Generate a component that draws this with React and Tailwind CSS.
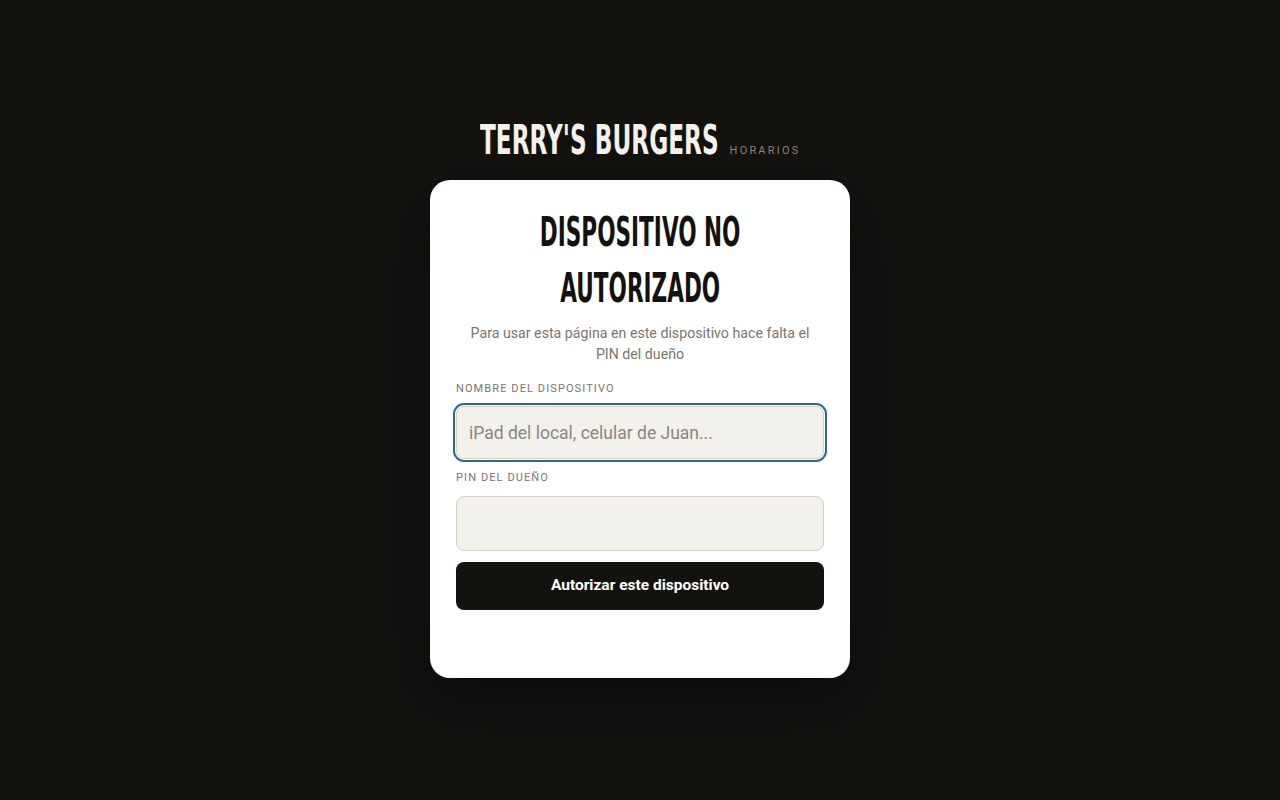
import React from 'react';

const display = { fontFamily: '"DejaVu Sans Condensed", "DejaVu Sans", sans-serif' };

export default function App() {
    return (
        <div
            className="min-h-screen w-full bg-[#14120f] flex flex-col items-center pt-[116px]"
            style={{ fontFamily: 'Roboto, "Liberation Sans", sans-serif' }}
        >
            {/* Brand */}
            <div className="flex items-baseline gap-3 mb-4">
                <h1 className="w-[238px] text-[40px] leading-[48px] font-bold uppercase text-[#f3f1ec] whitespace-nowrap" style={display}>
                    <span className="inline-block origin-left scale-x-[0.645]">Terry's Burgers</span>
                </h1>
                <span className="text-[11px] uppercase tracking-[0.2em] text-[#8a8680]">Horarios</span>
            </div>

            {/* Card */}
            <div className="w-[420px] bg-white rounded-[20px] px-[26px] pt-[24px] pb-[68px] shadow-[0_20px_60px_rgba(0,0,0,0.45)]">
                <h2 className="flex flex-col items-center text-[40px] leading-[56px] font-bold uppercase text-[#14120f] whitespace-nowrap" style={display}>
                    <span className="inline-block scale-x-[0.6]">Dispositivo no</span>
                    <span className="inline-block scale-x-[0.6]">Autorizado</span>
                </h2>
                <p className="mt-[7px] px-2 text-center text-[14.2px] leading-[21px] text-[#7a7670]">
                    Para usar esta página en este dispositivo hace falta el PIN del dueño
                </p>

                <label className="block mt-[17px] mb-[10px] text-[11px] leading-[14px] uppercase tracking-[0.1em] text-[#7a7670]">
                    Nombre del dispositivo
                </label>
                <input
                    type="text"
                    placeholder="iPad del local, celular de Juan..."
                    className="block w-full h-[53px] rounded-[8px] bg-[#f3f1ec] border border-[#d6d2c8] px-3 text-[17.5px] text-[#14120f] placeholder:text-[#8a8680] outline-2 outline-offset-1 outline-[#2c6a8e] outline-solid"
                />

                <label className="block mt-[12px] mb-[11px] text-[11px] leading-[14px] uppercase tracking-[0.1em] text-[#7a7670]">
                    PIN del dueño
                </label>
                <input
                    type="password"
                    className="block w-full h-[55px] rounded-[8px] bg-[#f3f1ec] border border-[#d6d2c8] px-3 text-[17px] outline-none"
                />

                <button className="mt-[11px] w-full h-[48px] rounded-[8px] bg-[#14120f] text-white text-[15.5px] font-bold">
                    Autorizar este dispositivo
                </button>
            </div>
        </div>
    );
}
